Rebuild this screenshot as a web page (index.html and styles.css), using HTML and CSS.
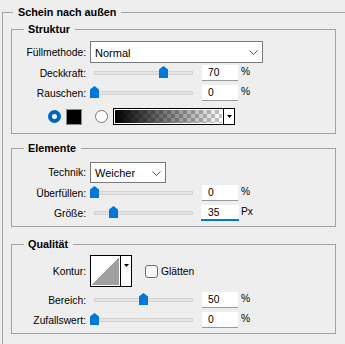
FILE: index.html
```html
<!DOCTYPE html>
<html>
<head>
    <title>Schein nach außen</title>
    <link rel="stylesheet" href="styles.css">
</head>
<body>
    <fieldset class="group outer">
        <legend>Schein nach außen</legend>

        <!-- Struktur -->
        <fieldset class="group section struktur">
            <legend>Struktur</legend>
            <div class="row select-row">
                <span class="label">Füllmethode:</span>
                <div class="select wide">
                    <span>Normal</span>
                    <svg class="chevron" width="9" height="5" viewBox="0 0 9 5"><path d="M0.5 0.5 L4.5 4.5 L8.5 0.5" fill="none" stroke="#555" stroke-width="1"/></svg>
                </div>
            </div>
            <div class="row">
                <span class="label">Deckkraft:</span>
                <div class="slider"><div class="track"></div><div class="thumb" style="left: 69px"></div></div>
                <div class="field">70</div>
                <span class="unit">%</span>
            </div>
            <div class="row">
                <span class="label">Rauschen:</span>
                <div class="slider"><div class="track"></div><div class="thumb" style="left: 0px"></div></div>
                <div class="field">0</div>
                <span class="unit">%</span>
            </div>
            <div class="swatch-row">
                <span class="radio checked"></span>
                <span class="color-swatch"></span>
                <span class="radio"></span>
                <div class="gradient-box">
                    <div class="gradient"></div>
                    <div class="drop">
                        <svg width="5" height="3" viewBox="0 0 5 3"><path d="M0 0 H5 L2.5 3 Z" fill="#000"/></svg>
                    </div>
                </div>
            </div>
        </fieldset>

        <!-- Elemente -->
        <fieldset class="group section elemente">
            <legend>Elemente</legend>
            <div class="row select-row short">
                <span class="label">Technik:</span>
                <div class="select narrow">
                    <span>Weicher</span>
                    <svg class="chevron" width="9" height="5" viewBox="0 0 9 5"><path d="M0.5 0.5 L4.5 4.5 L8.5 0.5" fill="none" stroke="#555" stroke-width="1"/></svg>
                </div>
            </div>
            <div class="row">
                <span class="label">Überfüllen:</span>
                <div class="slider"><div class="track"></div><div class="thumb" style="left: 0px"></div></div>
                <div class="field">0</div>
                <span class="unit">%</span>
            </div>
            <div class="row">
                <span class="label">Größe:</span>
                <div class="slider"><div class="track"></div><div class="thumb" style="left: 19px"></div></div>
                <div class="field focused">35</div>
                <span class="unit">Px</span>
            </div>
        </fieldset>

        <!-- Qualität -->
        <fieldset class="group section qualitaet">
            <legend>Qualität</legend>
            <div class="row contour-row">
                <span class="label">Kontur:</span>
                <div class="contour">
                    <div class="curve"></div>
                    <div class="drop top">
                        <svg width="5" height="3" viewBox="0 0 5 3"><path d="M0 0 H5 L2.5 3 Z" fill="#000"/></svg>
                    </div>
                </div>
                <span class="checkbox"></span>
                <span class="check-label">Glätten</span>
            </div>
            <div class="row">
                <span class="label">Bereich:</span>
                <div class="slider"><div class="track"></div><div class="thumb" style="left: 49px"></div></div>
                <div class="field">50</div>
                <span class="unit">%</span>
            </div>
            <div class="row">
                <span class="label">Zufallswert:</span>
                <div class="slider"><div class="track"></div><div class="thumb" style="left: 0px"></div></div>
                <div class="field">0</div>
                <span class="unit">%</span>
            </div>
        </fieldset>
    </fieldset>
</body>
</html>
```

FILE: styles.css
```css
* {
    margin: 0;
    padding: 0;
    box-sizing: border-box;
}

body {
    font-family: 'Liberation Sans', Arial, sans-serif;
    font-size: 10.3px;
    color: #000;
    background: #eeeeee;
    overflow: hidden;
    width: 345px;
    height: 344px;
}

.group {
    border: 1px solid #a3a3a3;
    min-width: 0;
}

.group legend {
    font-weight: bold;
    font-size: 10.8px;
    line-height: 14px;
}

.outer {
    margin: 5px -14px 0 2px;
    padding: 3px 22px 12px 8px;
}

.outer > legend {
    margin-left: 2px;
    padding: 0 5px;
}

.section > legend {
    margin-left: 12px;
    padding: 0 5px 0 4px;
}

.struktur {
    padding: 5px 0 8px;
}

.elemente {
    margin-top: 7px;
    padding: 7px 0 3px;
}

.qualitaet {
    margin-top: 10px;
    padding: 4px 0 3px;
}

.row {
    display: flex;
    align-items: center;
    height: 20px;
}

.label {
    width: 74px;
    margin-right: 4px;
    text-align: right;
    white-space: nowrap;
}

.select-row {
    height: 22px;
}

.select-row.short {
    height: 21px;
}

.select {
    height: 22px;
    background: #fff;
    border: 1px solid #7a7a7a;
    display: flex;
    align-items: center;
    justify-content: space-between;
    padding: 1px 4px 0 4px;
    font-size: 11px;
}

.select.wide {
    width: 173px;
}

.select.narrow {
    width: 76px;
    height: 21px;
}

/* slider */
.slider {
    position: relative;
    width: 108px;
    height: 20px;
    padding: 0 5px 0 4px;
    display: flex;
    align-items: center;
}

.track {
    flex: 1;
    height: 4px;
    background: #e4e4e4;
    border: 1px solid #d2d2d2;
}

.thumb {
    position: absolute;
    top: 3px;
    width: 9px;
    height: 12px;
    background: #0078d7;
    clip-path: polygon(50% 0, 100% 30%, 100% 100%, 0 100%, 0 30%);
}

.field {
    width: 36px;
    height: 16px;
    margin-left: 4px;
    background: #fff;
    border-bottom: 1px solid #999;
    padding: 2px 0 0 6px;
    line-height: 12px;
}

.field.focused {
    width: 38px;
    margin-left: 3px;
    margin-right: -1px;
    border-bottom: 2px solid #0078d7;
    padding-left: 7px;
}

.unit {
    margin-left: 3px;
    margin-top: -4px;
}

/* colour row */
.swatch-row {
    display: flex;
    align-items: center;
    margin-top: 5px;
    padding-left: 36px;
    height: 17px;
}

.radio {
    width: 13px;
    height: 13px;
    border-radius: 50%;
    border: 1px solid #777;
    background: #fff;
}

.radio.checked {
    border: 4px solid #0067c0;
    background: #fff;
}

.color-swatch {
    width: 16px;
    height: 16px;
    margin: 0 13px 0 5px;
    background: #000;
    border: 1px solid #8a8a8a;
}

.gradient-box {
    display: flex;
    width: 122px;
    height: 17px;
    margin-left: 5px;
    border: 1px solid #000;
    background: #fff;
}

.gradient {
    flex: 1;
    margin: 1px;
    background:
        linear-gradient(to right, #000, rgba(0, 0, 0, 0)),
        repeating-conic-gradient(#c6c6c6 0 25%, #fff 0 50%) 0 0 / 8px 8px;
}

.drop {
    width: 11px;
    border-left: 1px solid #000;
    display: flex;
    align-items: center;
    justify-content: center;
}

.drop.top {
    align-items: flex-start;
    padding-top: 8px;
}

/* contour row */
.contour-row {
    height: 32px;
    margin-bottom: 3px;
}

.contour {
    display: flex;
    width: 42px;
    height: 32px;
    border: 1px solid #000;
    background: #fff;
}

.curve {
    flex: 1;
    margin: 1px;
    background: linear-gradient(to top left, #a0a0a0 50%, #fff 50%);
}

.checkbox {
    width: 13px;
    height: 13px;
    margin-left: 13px;
    border: 1px solid #6f6f6f;
    border-radius: 3px;
    background: #f7f7f7;
}

.check-label {
    margin-left: 3px;
}
```
